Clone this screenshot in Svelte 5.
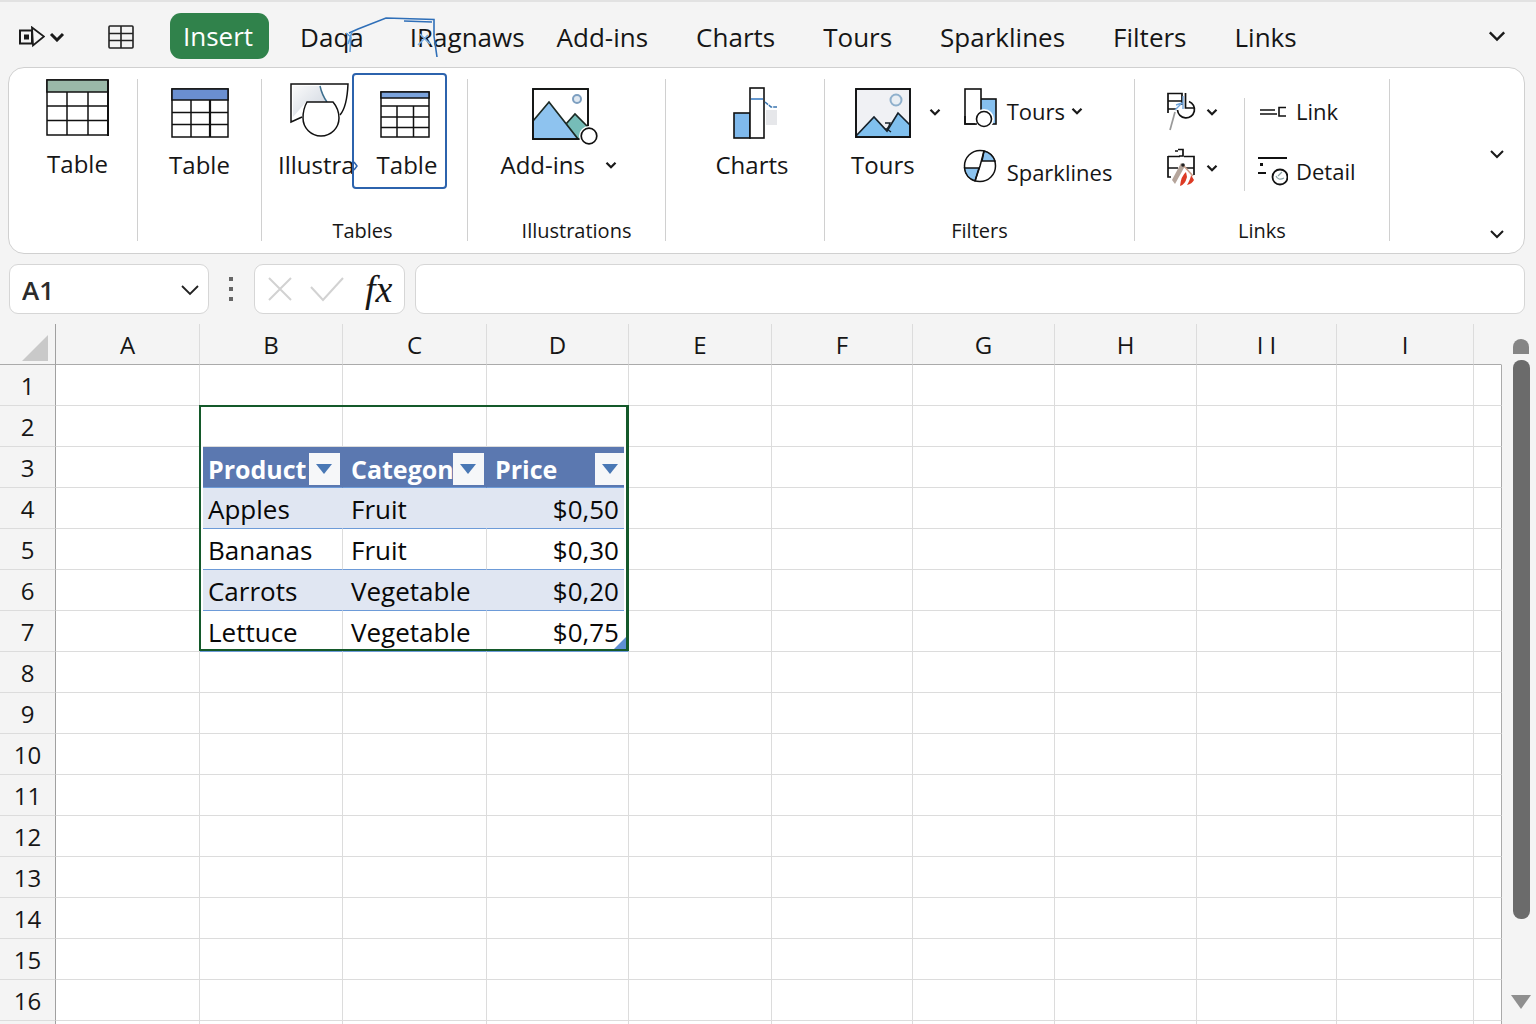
<script>
  const tabsBefore = ['Daqa', 'IRagnaws'];
  const tabsAfter = ['Add-ins', 'Charts', 'Tours', 'Sparklines', 'Filters', 'Links'];

  const columns = [
    { label: 'A', width: 144 },
    { label: 'B', width: 143 },
    { label: 'C', width: 144 },
    { label: 'D', width: 142 },
    { label: 'E', width: 143 },
    { label: 'F', width: 141 },
    { label: 'G', width: 142 },
    { label: 'H', width: 142 },
    { label: 'I I', width: 140 },
    { label: 'I', width: 137 },
    { label: '', width: 28 }
  ];
  const gutter = 56;
  const total = gutter + columns.reduce((sum, c) => sum + c.width, 0);
  const pct = (n) => `${(n / total) * 100}%`;
  const leftOf = (i) => gutter + columns.slice(0, i).reduce((sum, c) => sum + c.width, 0);

  const rowHeight = 41;
  const rows = Array.from({ length: 17 }, (_, i) => i + 1);
  const cells = {
    3: ['Product', 'Categon', 'Price'],
    4: ['Apples', 'Fruit', '$0,50'],
    5: ['Bananas', 'Fruit', '$0,30'],
    6: ['Carrots', 'Vegetable', '$0,20'],
    7: ['Lettuce', 'Vegetable', '$0,75']
  };
  const selection = { firstCol: 1, lastCol: 3, firstRow: 2, lastRow: 7 };

  let nameBox = $state('A1');
  let formula = $state('');
</script>

{#snippet chevron(size)}
  <svg class="chevron {size}" viewBox="0 0 16 10" aria-hidden="true">
    <path d="M2 2 L8 8 L14 2" />
  </svg>
{/snippet}

<div class="app">
  <nav class="tabs" aria-label="Ribbon tabs">
    <button class="plain quick" aria-label="Quick access">
      <svg width="26" height="22" viewBox="0 0 26 22" fill="none" stroke="#1a1a1a" stroke-width="2">
        <path d="M1 4.500H14V17.500H1Z" />
        <path d="M13 1.500L25 10.500L14 19.500Z" fill="#f4f4f4" stroke-width="1.800" />
        <path d="M13 5V17" />
        <rect x="5.500" y="9" width="4" height="4" fill="#1a1a1a" stroke-width="1" />
      </svg>
      {@render chevron('bold')}
    </button>
    <button class="plain sheet-button" aria-label="Sheet">
      <svg width="26" height="24" viewBox="0 0 26 24" fill="none" stroke="#222" stroke-width="1.600">
        <rect x="1" y="1" width="24" height="22" rx="1" />
        <path d="M1 8.500H25M1 15.500H25M13 1V23" />
      </svg>
    </button>
    <button class="tab active">Insert</button>
    <div class="marked">
      {#each tabsBefore as tab}
        <button class="tab">{tab}</button>
      {/each}
      <svg class="scribble" viewBox="0 0 94 44" fill="none" stroke="#2f6fb8" stroke-width="1.600" aria-hidden="true">
        <path d="M3 17L12 13L40 2L88 3.500L88 20L91 41" />
        <path d="M58 5L86 6" />
        <path d="M0 17L5 21L4 36M6 16L2 28" stroke="#5b9bd8" />
        <path d="M72 29L82 19M74 18L84 28" stroke="#7fb2e6" />
      </svg>
    </div>
    {#each tabsAfter as tab}
      <button class="tab">{tab}</button>
    {/each}
    <button class="plain collapse" aria-label="Ribbon options">{@render chevron('wide')}</button>
  </nav>

  <section class="ribbon" aria-label="Insert">
    <div class="group">
      <button class="tool first">
        <svg width="64" height="58" viewBox="0 0 64 58" stroke="#111" stroke-width="1.500" fill="none">
          <rect x="1" y="1" width="61" height="55" fill="#fff" />
          <rect x="1" y="1" width="61" height="12" fill="#9ab8a8" />
          <path d="M1 27H62M1 41.500H62M21 13V56M42 13V56" />
          <path d="M62 1V57" stroke-width="2" />
        </svg>
        <span>Table</span>
      </button>
    </div>

    <div class="group">
      <button class="tool">
        <svg width="58" height="50" viewBox="0 0 58 50" stroke="#111" stroke-width="1.500" fill="none">
          <rect x="1" y="1" width="56" height="48" fill="#fff" />
          <rect x="1" y="1" width="56" height="11" fill="#6a8fd0" />
          <path d="M1 24.500H57M1 36.500H57M20 12V49" />
          <path d="M39 12V49" stroke-width="2.200" />
        </svg>
        <span>Table</span>
      </button>
    </div>

    <div class="group pair">
      <div class="content">
        <button class="tool clipped" aria-label="Illustrations">
          <svg width="60" height="54" viewBox="0 0 60 54" stroke="#111" stroke-width="1.500" fill="none">
            <defs>
              <linearGradient id="pane" x1="0" y1="0" x2="1" y2="1">
                <stop offset="0" stop-color="#fafafa" />
                <stop offset="1" stop-color="#ccd3de" />
              </linearGradient>
            </defs>
            <path d="M3 3H29L36 19H16L3 34Z" fill="url(#pane)" stroke="none" />
            <path d="M12 34L1 39V1H58Q57 24 50 32" />
            <path d="M30 3Q32 12 37 19" stroke="#3d6f8f" />
            <path d="M17 19H43Q49 26 49 35A18 18 0 0 1 13 35Q13 26 17 19Z" fill="#fff" />
          </svg>
          <span>Illustra</span>
        </button>
        <button class="tool selected">
          <svg width="50" height="47" viewBox="0 0 50 47" stroke="#111" stroke-width="1.500" fill="none">
            <rect x="1" y="1" width="48" height="45" fill="#fff" />
            <rect x="1" y="1" width="48" height="6" fill="#7ba3dc" />
            <path d="M1 15H49M1 26H49M1 36.500H49M17 15V46M33.500 15V46" />
          </svg>
          <span>Table</span>
          <svg class="nub" width="6" height="10" viewBox="0 0 6 10" fill="none" stroke="#2c63ad" stroke-width="1.500" aria-hidden="true"><path d="M1 1L4 5L1 9" /></svg>
        </button>
      </div>
      <div class="caption">Tables</div>
    </div>

    <div class="group illustrations">
      <button class="tool">
        <svg width="66" height="58" viewBox="0 0 66 58" stroke="#1c2a24" stroke-width="1.700" fill="none">
          <rect x="1" y="1" width="55" height="50" fill="#fff" />
          <path d="M34 36L43 26L56 39V51H40Z" fill="#76bdb8" />
          <path d="M1 33L17 14L46 51H1Z" fill="#8ec3ef" />
          <rect x="1" y="1" width="55" height="50" stroke="#111" />
          <circle cx="45" cy="11" r="4" stroke="#7d9fc0" stroke-width="2" fill="#dfe8f1" />
          <circle cx="57" cy="48" r="10" fill="#fff" stroke="none" />
          <circle cx="57" cy="48" r="7.800" fill="#fff" stroke="#111" />
        </svg>
        <span class="with-arrow">Add-ins {@render chevron('small')}</span>
      </button>
      <div class="caption">Illustrations</div>
    </div>

    <div class="group charts">
      <button class="tool">
        <svg width="46" height="52" viewBox="0 0 46 52" stroke="#111" stroke-width="1.600" fill="none">
          <rect x="1" y="26" width="16" height="25" fill="#7fb9ec" />
          <rect x="17" y="1" width="14" height="50" fill="#fff" />
          <path d="M18 12H30" stroke="#3f7fc4" />
          <path d="M32 15L38 20H44" stroke="#3b76b0" stroke-dasharray="4 1" />
          <rect x="33" y="23" width="11" height="15" fill="#e6e7ea" stroke="none" />
        </svg>
        <span>Charts</span>
      </button>
    </div>

    <div class="group filters">
      <div class="content">
        <button class="tool">
          <svg width="56" height="50" viewBox="0 0 56 50" stroke="#16222b" stroke-width="1.700" fill="none">
            <rect x="1" y="1" width="54" height="48" fill="#f0f1f4" />
            <path d="M1 48L19 29L32 43L43 25L55 37V49H1Z" fill="#80c0ee" />
            <path d="M30 35H35Q33 42 30 41M32 41L36 44" stroke-width="1.400" />
            <circle cx="41" cy="12" r="5.500" stroke="#8fb0cc" stroke-width="2" fill="#e9eef3" />
            <rect x="1" y="1" width="54" height="48" stroke="#111" />
          </svg>
          <span>Tours</span>
        </button>
        <button class="plain more" aria-label="More tours">{@render chevron('small')}</button>
        <div class="stack">
          <button class="row-tool">
            <svg width="36" height="40" viewBox="0 0 36 40" stroke="#111" stroke-width="1.600" fill="none">
              <rect x="17" y="11" width="16" height="25" fill="#86c0ef" />
              <rect x="2" y="1" width="16" height="35" fill="#fff" />
              <circle cx="21" cy="31" r="10" fill="#fff" stroke="none" />
              <path d="M2 28V36H14" />
              <circle cx="21" cy="31" r="7.500" fill="#fff" />
            </svg>
            <span>Tours {@render chevron('small')}</span>
          </button>
          <button class="row-tool">
            <svg width="36" height="36" viewBox="0 0 36 36" stroke="#111" stroke-width="1.500" fill="none">
              <circle cx="17" cy="18" r="15.500" fill="#fff" />
              <path d="M21 3A15.500 15.500 0 0 1 32 13H19Z" fill="#8cc3ef" />
              <path d="M1.500 20H16L12 33A15.500 15.500 0 0 1 1.500 20Z" fill="#8cc3ef" />
              <path d="M21 3L17 18L12 33" />
            </svg>
            <span>Sparklines</span>
          </button>
        </div>
      </div>
      <div class="caption">Filters</div>
    </div>

    <div class="group links">
      <div class="content">
        <div class="stack">
          <button class="row-tool" aria-label="Shape link">
            <svg width="32" height="40" viewBox="0 0 32 40" stroke="#111" stroke-width="1.700" fill="none">
              <path d="M2 21V1.500H16V13M2 9H16M2 17H10" />
              <path d="M19.500 1V16H29" />
              <path d="M23 9.500A8.500 8.500 0 1 1 11.500 18" />
              <path d="M17 4V17M10 13L16 11L9 18" stroke="#6fa4dc" stroke-width="1.400" />
              <path d="M9 20L4 38" stroke="#999" />
            </svg>
            {@render chevron('small')}
          </button>
          <button class="row-tool" aria-label="Drawing link">
            <svg width="32" height="40" viewBox="0 0 32 40" stroke="#111" stroke-width="1.700" fill="none">
              <path d="M9 3H12M12 1.500H17V8M13 8H17V4M2 8.500H14M18 8.500H28V27M2 8V29H5M2 20H12M20 20H28" />
              <path d="M6 32L15 15L19 18L9 36Z" fill="#b5a59b" stroke="none" />
              <path d="M17 17L27 28" stroke="#c9a08c" />
              <path d="M14 38Q15 28 20 24L21 29Q19 37 14 38ZM21 37Q25 30 25 27L28 32Q26 36 21 37Z" fill="#dd3a24" stroke="none" />
              <circle cx="17" cy="17" r="1.800" fill="#222" stroke="none" />
            </svg>
            {@render chevron('small')}
          </button>
        </div>
        <div class="stack named">
          <button class="row-tool">
            <svg width="30" height="32" viewBox="0 0 30 32" stroke="#111" stroke-width="1.600" fill="none">
              <path d="M2 15H17M2 19H19M28 12.500H21V21H28" />
            </svg>
            <span>Link</span>
          </button>
          <button class="row-tool">
            <svg width="30" height="32" viewBox="0 0 30 32" stroke="#111" stroke-width="2" fill="none">
              <path d="M0 3H29" />
              <path d="M0 18H8" />
              <path d="M2 8H5V11H2Z" fill="#111" stroke="none" />
              <circle cx="22" cy="22" r="7.500" stroke-width="1.800" />
              <path d="M18 21Q20 26 26 23M20 21L24 17" stroke="#8aa3a5" stroke-width="1.200" />
            </svg>
            <span>Detail</span>
          </button>
        </div>
      </div>
      <div class="caption">Links</div>
    </div>

    <div class="group overflow">
      <button class="plain" aria-label="More commands">{@render chevron('medium')}</button>
      <button class="plain" aria-label="Collapse ribbon">{@render chevron('medium')}</button>
    </div>
  </section>

  <div class="formula-bar">
    <div class="box name-box">
      <input aria-label="Name box" bind:value={nameBox} />
      <button class="plain" aria-label="Show names">
        <svg width="20" height="12" viewBox="0 0 20 12" fill="none" stroke="#222" stroke-width="1.800"><path d="M2 2L10 10L18 2" /></svg>
      </button>
    </div>
    <div class="dots" aria-hidden="true"><i></i><i></i><i></i></div>
    <div class="box actions">
      <button class="plain" aria-label="Cancel">
        <svg width="26" height="26" viewBox="0 0 26 26" fill="none" stroke="#d2d2d2" stroke-width="2"><path d="M2 2L24 24M24 2L2 24" /></svg>
      </button>
      <button class="plain" aria-label="Enter">
        <svg width="36" height="26" viewBox="0 0 36 26" fill="none" stroke="#d2d2d2" stroke-width="2"><path d="M2 11L14 24L34 2" /></svg>
      </button>
      <button class="plain fx" aria-label="Insert function">fx</button>
    </div>
    <input class="box formula" aria-label="Formula" bind:value={formula} />
  </div>

  <main class="sheet">
    <div class="grid">
      <table>
        <colgroup>
          <col style:width={pct(gutter)} />
          {#each columns as c}<col style:width={pct(c.width)} />{/each}
        </colgroup>
        <thead>
          <tr>
            <th class="corner" aria-label="Select all">
              <svg width="26" height="26" viewBox="0 0 26 26"><path d="M26 0V26H0Z" fill="#c9c9c9" /></svg>
            </th>
            {#each columns as c}<th scope="col">{c.label}</th>{/each}
          </tr>
        </thead>
        <tbody>
          {#each rows as r}
            <tr>
              <th scope="row">{r}</th>
              {#each columns as c, i}
                {@const text = cells[r]?.[i - 1]}
                {#if text && r === 3}
                  <td class="head">
                    <div>
                      <span>{text}</span>
                      <button aria-label="Filter {text}">
                        <svg width="16" height="10" viewBox="0 0 16 10"><path d="M0 0H16L8 10Z" fill="#4a78b5" /></svg>
                      </button>
                    </div>
                  </td>
                {:else if text}
                  <td class="data" class:band={r % 2 === 0} class:last={r === 7} class:price={i === 3}>{text}</td>
                {:else}
                  <td></td>
                {/if}
              {/each}
            </tr>
          {/each}
        </tbody>
      </table>
      <div
        class="selection"
        style:left={pct(leftOf(selection.firstCol))}
        style:width={pct(leftOf(selection.lastCol + 1) - leftOf(selection.firstCol))}
        style:top="{selection.firstRow * rowHeight}px"
        style:height="{(selection.lastRow - selection.firstRow + 1) * rowHeight}px"
      >
        <svg width="12" height="12" viewBox="0 0 12 12"><path d="M12 0V12H0Z" fill="#5d8fd3" /></svg>
      </div>
    </div>
    <div class="scroll" aria-hidden="true">
      <div class="cap"></div>
      <div class="track"><div class="thumb"></div></div>
      <svg width="20" height="14" viewBox="0 0 20 14"><path d="M0 0H20L10 14Z" fill="#8f8f8f" /></svg>
    </div>
  </main>
</div>

<style>
  :global(body) {
    margin: 0;
    background: #f4f4f4;
  }
  .app {
    box-sizing: border-box;
    height: 100vh;
    display: flex;
    flex-direction: column;
    overflow: hidden;
    border-top: 2px solid #e2e2e2;
    background: #f4f4f4;
    color: #161616;
    font-family: 'Open Sans', 'Noto Sans', sans-serif;
  }
  .app * {
    box-sizing: border-box;
  }
  button,
  input {
    font: inherit;
    color: inherit;
    margin: 0;
    padding: 0;
    border: 0;
    background: none;
  }
  svg {
    display: block;
    flex: none;
  }
  .plain {
    display: flex;
    align-items: center;
    justify-content: center;
  }
  .chevron {
    fill: none;
    stroke: #1a1a1a;
    width: 12px;
    height: 8px;
    stroke-width: 3;
  }
  .chevron.bold {
    width: 16px;
    height: 10px;
  }
  .chevron.wide {
    width: 20px;
    height: 12px;
    stroke-width: 2;
  }
  .chevron.medium {
    width: 16px;
    height: 10px;
    stroke-width: 2;
  }

  .tabs {
    display: flex;
    align-items: center;
    flex: none;
    height: 65px;
    padding: 4px 29px 0 19px;
    gap: 48px;
    font-size: 26px;
    line-height: 36px;
  }
  .tabs > * {
    flex: none;
  }
  .quick {
    gap: 4px;
  }
  .sheet-button {
    margin-left: -5px;
  }
  .tab {
    white-space: nowrap;
  }
  .tab.active {
    height: 46px;
    margin: 0 -17px 1px -12px;
    padding: 0 16px 0 13px;
    border-radius: 11px;
    background: #30824b;
    color: #fff;
  }
  .marked {
    position: relative;
    display: flex;
    gap: 46px;
    margin-right: -16px;
  }
  .scribble {
    position: absolute;
    left: 46px;
    top: -3px;
    width: 94px;
    height: 44px;
  }
  .collapse {
    margin-left: auto;
    padding-bottom: 2px;
  }

  .ribbon {
    display: grid;
    grid-template-columns: 129fr 124fr 206fr 198fr 159fr 310fr 255fr 134fr;
    flex: none;
    height: 187px;
    margin: 0 11px 0 8px;
    padding: 11px 0 12px;
    border: 1px solid #d0d0d0;
    border-radius: 16px;
    background: #fff;
    font-size: 24px;
    line-height: 32px;
  }
  .group {
    position: relative;
    display: flex;
    flex-direction: column;
    align-items: center;
    min-width: 0;
    border-right: 1px solid #d0d0d0;
  }
  .group:last-child {
    border-right: 0;
  }
  .content {
    display: flex;
    align-self: stretch;
  }
  .caption {
    margin-top: auto;
    margin-bottom: -3px;
    font-size: 20px;
    line-height: 26px;
  }
  .tool {
    display: flex;
    flex-direction: column;
    align-items: center;
    justify-content: space-between;
    height: 102px;
    padding-top: 9px;
    white-space: nowrap;
  }
  .tool.first {
    height: 101px;
    padding-top: 0;
    padding-left: 9px;
  }
  .pair .content {
    justify-content: flex-end;
    margin-top: -6px;
    padding-right: 20px;
  }
  .clipped {
    flex: 1;
    min-width: 0;
    height: 108px;
    padding: 10px 0 0 16px;
    align-items: flex-start;
  }
  .clipped svg {
    margin-left: 12px;
  }
  .selected {
    position: relative;
    flex: none;
    width: 95px;
    height: 116px;
    padding: 16px 0 6px 10px;
    border: 2px solid #2c63ad;
    border-radius: 4px;
  }
  .selected span {
    padding-left: 5px;
  }
  .nub {
    position: absolute;
    left: -1px;
    bottom: 16px;
  }
  .pair .caption {
    padding-right: 4px;
  }
  .illustrations .tool {
    align-items: flex-start;
    width: 132px;
  }
  .illustrations .tool > svg {
    margin-left: 31px;
  }
  .illustrations .caption {
    padding-left: 20px;
  }
  .with-arrow {
    display: flex;
    align-items: center;
    gap: 20px;
  }
  .charts .tool {
    padding-top: 8px;
    padding-left: 14px;
  }
  .charts svg {
    margin-left: 8px;
  }
  .filters .content {
    padding-left: 26px;
  }
  .more {
    height: 66px;
    margin: 0 22px 0 14px;
  }
  .stack {
    display: flex;
    flex-direction: column;
    justify-content: space-between;
    height: 108px;
    padding-top: 9px;
    font-size: 22px;
    line-height: 30px;
  }
  .row-tool {
    display: flex;
    align-items: center;
    gap: 8px;
    text-align: left;
    white-space: nowrap;
  }
  .row-tool span {
    display: flex;
    align-items: center;
    gap: 6px;
  }
  .filters .row-tool:last-child span {
    padding-top: 12px;
  }
  .filters .row-tool:first-child span {
    padding-top: 6px;
  }
  .links .content {
    padding-left: 31px;
  }
  .links .stack {
    padding-top: 13px;
    height: 109px;
  }
  .links .stack.named {
    height: 93px;
    margin: 19px 0 0 26px;
    padding: 0 0 4px 13px;
    border-left: 1px solid #d0d0d0;
  }
  .named .row-tool:first-child {
    margin-top: -3px;
  }
  .overflow {
    justify-content: flex-end;
    align-items: flex-end;
    gap: 70px;
    padding-right: 19px;
    padding-bottom: 2px;
  }

  .formula-bar {
    display: flex;
    flex: none;
    align-items: stretch;
    height: 50px;
    margin: 10px 11px 0 9px;
  }
  .box {
    display: flex;
    align-items: center;
    border: 1px solid #d6d6d6;
    border-radius: 9px;
    background: #fff;
  }
  .name-box {
    width: 200px;
    padding: 2px 8px 0 12px;
  }
  .name-box input {
    flex: 1;
    min-width: 0;
    font-size: 26px;
    font-weight: 600;
    color: #2b2b2b;
  }
  .dots {
    display: flex;
    flex-direction: column;
    align-items: center;
    justify-content: center;
    gap: 6px;
    width: 45px;
    padding-right: 2px;
  }
  .dots i {
    width: 4px;
    height: 4px;
    background: #666;
  }
  .actions {
    width: 151px;
    gap: 16px;
    padding-left: 12px;
    margin-right: 10px;
  }
  .fx {
    margin-left: 4px;
    font-family: 'Liberation Serif', serif;
    font-style: italic;
    font-size: 38px;
    line-height: 40px;
  }
  .formula {
    flex: 1;
    min-width: 0;
    padding: 0 12px;
    font-size: 24px;
  }

  .sheet {
    display: flex;
    flex: 1;
    min-height: 0;
    margin-top: 10px;
    overflow: hidden;
  }
  .grid {
    position: relative;
    flex: 1;
    min-width: 0;
  }
  table {
    width: 100%;
    table-layout: fixed;
    border-collapse: separate;
    border-spacing: 0;
    font-size: 24px;
    line-height: 32px;
  }
  th,
  td {
    height: 41px;
    padding: 2px 0 0;
    border-right: 1px solid #dcdcdc;
    border-bottom: 1px solid #dcdcdc;
    font-weight: 400;
    white-space: nowrap;
    overflow: hidden;
  }
  td {
    background: #fff;
  }
  thead th {
    border-bottom-color: #aaa;
  }
  thead th:last-child {
    border-right-color: transparent;
  }
  th:first-child {
    border-right-color: #a0a0a0;
  }
  td:last-child {
    border-right-color: #aaa;
  }
  .corner svg {
    margin: 6px 0 0 22px;
  }
  td.head,
  td.data {
    font-size: 26px;
  }
  td.head {
    border-color: #5b78b0;
    border-bottom-color: #6d9bd8;
    background: #5b78b0;
    color: #fff;
    font-size: 25px;
    font-weight: 700;
  }
  .head div {
    display: flex;
    align-items: center;
    justify-content: space-between;
    padding: 2px 2px 0 8px;
  }
  .head span {
    min-width: 0;
    overflow: hidden;
  }
  .head button {
    display: grid;
    place-items: center;
    flex: none;
    width: 31px;
    height: 32px;
    background: #f6f7f9;
  }
  td.data {
    padding: 1px 9px 0 8px;
    border-bottom-color: #6d9bd8;
    color: #080808;
  }
  td.band {
    border-right-color: #e0e6f2;
    background: #e0e6f2;
  }
  td.price {
    text-align: right;
  }
  .selection {
    position: absolute;
    margin: -1px 0 0 -1px;
    border: 2px solid #14592a;
    box-shadow: inset 2px 0 #fff, inset -2px 0 #fff, 1px 0 #14592a;
    pointer-events: none;
  }
  .selection svg {
    position: absolute;
    right: 0;
    bottom: 0;
  }

  .scroll {
    display: flex;
    flex-direction: column;
    align-items: center;
    flex: none;
    width: 34px;
    padding: 15px 0 15px 4px;
  }
  .cap {
    width: 16px;
    height: 15px;
    border-radius: 8px 8px 0 0;
    background: #858585;
  }
  .track {
    flex: 1;
    width: 17px;
    margin-top: 6px;
  }
  .thumb {
    height: 88%;
    border-radius: 8px;
    background: #6b6b6b;
  }
</style>
